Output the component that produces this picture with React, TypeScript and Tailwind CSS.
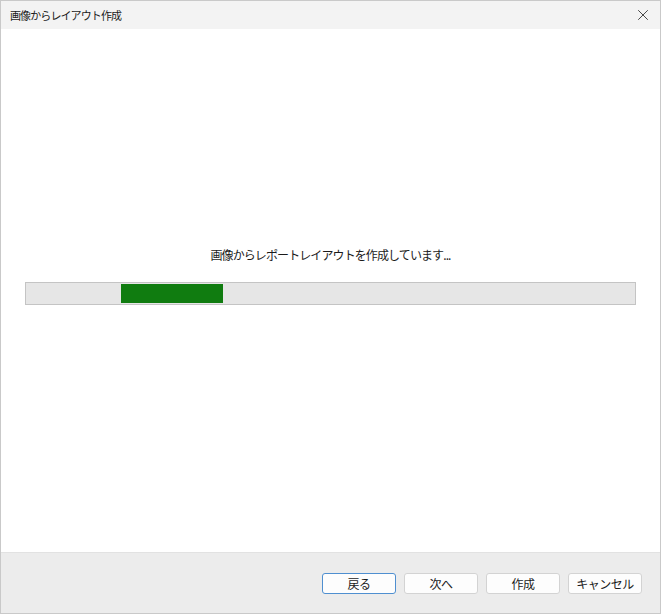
import { X } from "lucide-react";

const FONT = { fontFamily: '"Noto Sans CJK JP", "Noto Sans", sans-serif' };

const buttons = ["戻る", "次へ", "作成", "キャンセル"];

export default function App() {
  const progress = { left: 94, width: 102 }; // px offsets inside the track

  return (
    <div style={FONT} className="w-[661px] h-[614px] flex flex-col border border-[#c9c9c9] bg-white text-[#1b1b1b]">
      {/* title bar */}
      <div className="h-[28px] shrink-0 flex items-center justify-between bg-[#f3f3f3] pl-[9px] pr-[8px]">
        <span className="text-[11px] tracking-[-0.9px] leading-none">画像からレイアウト作成</span>
        <X size={18} strokeWidth={1.1} className="text-[#222]" />
      </div>

      {/* body */}
      <div className="flex-1 flex flex-col items-center pt-[220px] px-[24px]">
        <div className="text-[12px] tracking-[-0.9px] leading-none mb-[21px]">画像からレポートレイアウトを作成しています...</div>
        <div className="w-full h-[23px] border border-[#c4c4c4] bg-[#e6e6e6] p-[1px] flex">
          <div className="h-full bg-[#e6e6e6]" style={{ width: progress.left }} />
          <div className="h-full bg-[#107c10]" style={{ width: progress.width }} />
        </div>
      </div>

      {/* footer */}
      <div className="h-[61px] shrink-0 bg-[#ececec] border-t border-[#e2e2e2] flex items-center justify-end gap-[8px] pr-[18px] pt-[1px]">
        {buttons.map((b, i) => (
          <button
            key={b}
            className={`w-[74px] h-[21px] rounded-[3px] bg-[#fdfdfd] text-[12px] tracking-[-0.5px] leading-none flex items-center justify-center border ${
              i === 0 ? "border-[#4f8fd0]" : "border-[#d3d3d3]"
            }`}
          >
            {b}
          </button>
        ))}
      </div>
    </div>
  );
}
